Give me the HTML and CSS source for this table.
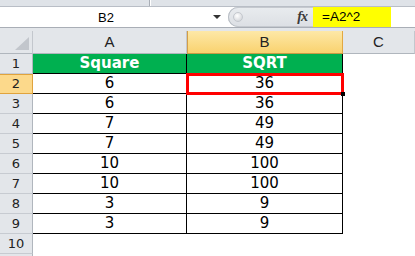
FILE: index.html
```html
<!DOCTYPE html>
<html>
<head>
<meta charset="utf-8">
<link rel="stylesheet" href="styles.css">
</head>
<body>
<div class="app">
  <div class="ribbon-edge"><span class="sep"></span></div>
  <div class="fbar">
    <div class="namebox"><span class="name">B2</span><span class="caret"></span></div>
    <div class="handle"><span class="dot"></span><span class="fx">fx</span></div>
    <div class="formula">=A2^2</div>
    <div class="rest"></div>
  </div>
  <div class="gap"></div>
  <div class="sheet">
    <div class="corner"><span class="tri"></span></div>
    <div class="ch">A</div>
    <div class="ch sel">B</div>
    <div class="ch">C</div>

    <div class="rh">1</div>
    <div class="c t hd">Square</div>
    <div class="c t hd">SQRT</div>
    <div class="c"></div>

    <div class="rh sel">2</div>
    <div class="c t">6</div>
    <div class="c t">36</div>
    <div class="c"></div>

    <div class="rh">3</div>
    <div class="c t">6</div>
    <div class="c t">36</div>
    <div class="c"></div>

    <div class="rh">4</div>
    <div class="c t">7</div>
    <div class="c t">49</div>
    <div class="c"></div>

    <div class="rh">5</div>
    <div class="c t">7</div>
    <div class="c t">49</div>
    <div class="c"></div>

    <div class="rh">6</div>
    <div class="c t">10</div>
    <div class="c t">100</div>
    <div class="c"></div>

    <div class="rh">7</div>
    <div class="c t">10</div>
    <div class="c t">100</div>
    <div class="c"></div>

    <div class="rh">8</div>
    <div class="c t">3</div>
    <div class="c t">9</div>
    <div class="c"></div>

    <div class="rh">9</div>
    <div class="c t">3</div>
    <div class="c t">9</div>
    <div class="c"></div>

    <div class="rh">10</div>
    <div class="c"></div>
    <div class="c"></div>
    <div class="c"></div>

    <div class="rh"></div>
    <div class="c"></div>
    <div class="c"></div>
    <div class="c"></div>
  </div>
  <div class="active"><span class="fill"></span></div>
</div>
</body>
</html>
```
FILE: styles.css
```css
html, body {
  margin: 0;
  padding: 0;
  background: #ffffff;
}
.app {
  position: relative;
  width: 415px;
  height: 256px;
  overflow: hidden;
  font-family: "Liberation Sans", Arial, sans-serif;
}
.ribbon-edge {
  height: 6px;
  background: #dfe3e8;
  border-bottom: 1px solid #b9bec6;
  display: flex;
  padding-left: 149px;
}
.sep {
  width: 1px;
  height: 6px;
  background: #a9aeb6;
  border-right: 1px solid #ffffff;
}
.fbar {
  height: 20px;
  display: flex;
  background: #ffffff;
  border-bottom: 1px solid #a9aeb6;
}
.namebox {
  width: 228px;
  display: flex;
  align-items: center;
  position: relative;
}
.name {
  width: 212px;
  text-align: center;
  font-size: 13px;
  color: #000;
}
.caret {
  width: 0;
  height: 0;
  border-left: 4px solid transparent;
  border-right: 4px solid transparent;
  border-top: 4px solid #333;
  margin-left: 1px;
}
.handle {
  width: 85px;
  background: linear-gradient(#e9ecef, #dcdfe4);
  border-radius: 10px 0 0 10px;
  box-shadow: inset 1px 0 #b7bcc3, inset 0 1px #c5c9cf, inset 0 -1px #c5c9cf;
  display: flex;
  align-items: center;
  justify-content: space-between;
  padding: 0 6px 0 5px;
  box-sizing: border-box;
}
.dot {
  width: 8px;
  height: 8px;
  border-radius: 50%;
  background: radial-gradient(circle at 40% 35%, #ffffff, #c9ccd1);
  border: 1px solid #c4c8ce;
}
.fx {
  font-family: "Liberation Serif", "Times New Roman", serif;
  font-style: italic;
  font-weight: bold;
  font-size: 14px;
  color: #3a3a3a;
  letter-spacing: -1px;
}
.formula {
  width: 78px;
  background: #ffff00;
  font-size: 13.5px;
  line-height: 20px;
  padding-left: 9px;
  box-sizing: border-box;
  color: #000;
}
.rest {
  flex: 1;
}
.gap {
  height: 3px;
  background: #e3e6ea;
}
.sheet {
  display: grid;
  grid-template-columns: 33px 154px 156px 72px;
  grid-template-rows: 23px;
  grid-auto-rows: 20px;
}
.corner {
  background: #e3e6ea;
  border-right: 1px solid #c3c7cd;
  border-bottom: 1px solid #b0b6bd;
  box-sizing: border-box;
  display: flex;
  align-items: flex-end;
  justify-content: flex-end;
  padding: 0 3px 3px 0;
}
.tri {
  width: 0;
  height: 0;
  border-left: 14px solid transparent;
  border-bottom: 13px solid #c2c6cc;
}
.ch {
  background: #e3e6ea;
  border-right: 1px solid #c3c7cd;
  border-bottom: 1px solid #b0b6bd;
  box-sizing: border-box;
  text-align: center;
  font-size: 15px;
  line-height: 22px;
  color: #222;
}
.ch.sel {
  background: linear-gradient(#fde8a7, #f9d26f);
  border-right-color: #e2a842;
  border-bottom-color: #c79a45;
  box-shadow: inset 1px 0 #d39e48;
}
.rh {
  background: #e3e6ea;
  border-right: 1px solid #b0b6bd;
  border-bottom: 1px solid #c7cbd1;
  box-sizing: border-box;
  text-align: center;
  font-family: "DejaVu Sans", Verdana, sans-serif;
  font-size: 13px;
  line-height: 19px;
  color: #222;
}
.rh.sel {
  background: #fcd98b;
  border-right-color: #e0a33d;
  border-bottom-color: #e0a33d;
  box-shadow: inset 0 1px #e0a33d;
}
.c {
  box-sizing: border-box;
  text-align: center;
  font-family: "DejaVu Sans", Verdana, sans-serif;
  font-size: 15px;
  line-height: 19px;
  color: #000;
}
.c.t {
  border-right: 1px solid #000;
  border-bottom: 1px solid #000;
}
.c.hd {
  background: #00b050;
  color: #ffffff;
  font-weight: bold;
}
.active {
  position: absolute;
  left: 186px;
  top: 73px;
  width: 158px;
  height: 22px;
  box-sizing: border-box;
  border: 3px solid #ff0000;
}
.fill {
  position: absolute;
  right: -4px;
  bottom: -4px;
  width: 4px;
  height: 4px;
  background: #000;
}
```
